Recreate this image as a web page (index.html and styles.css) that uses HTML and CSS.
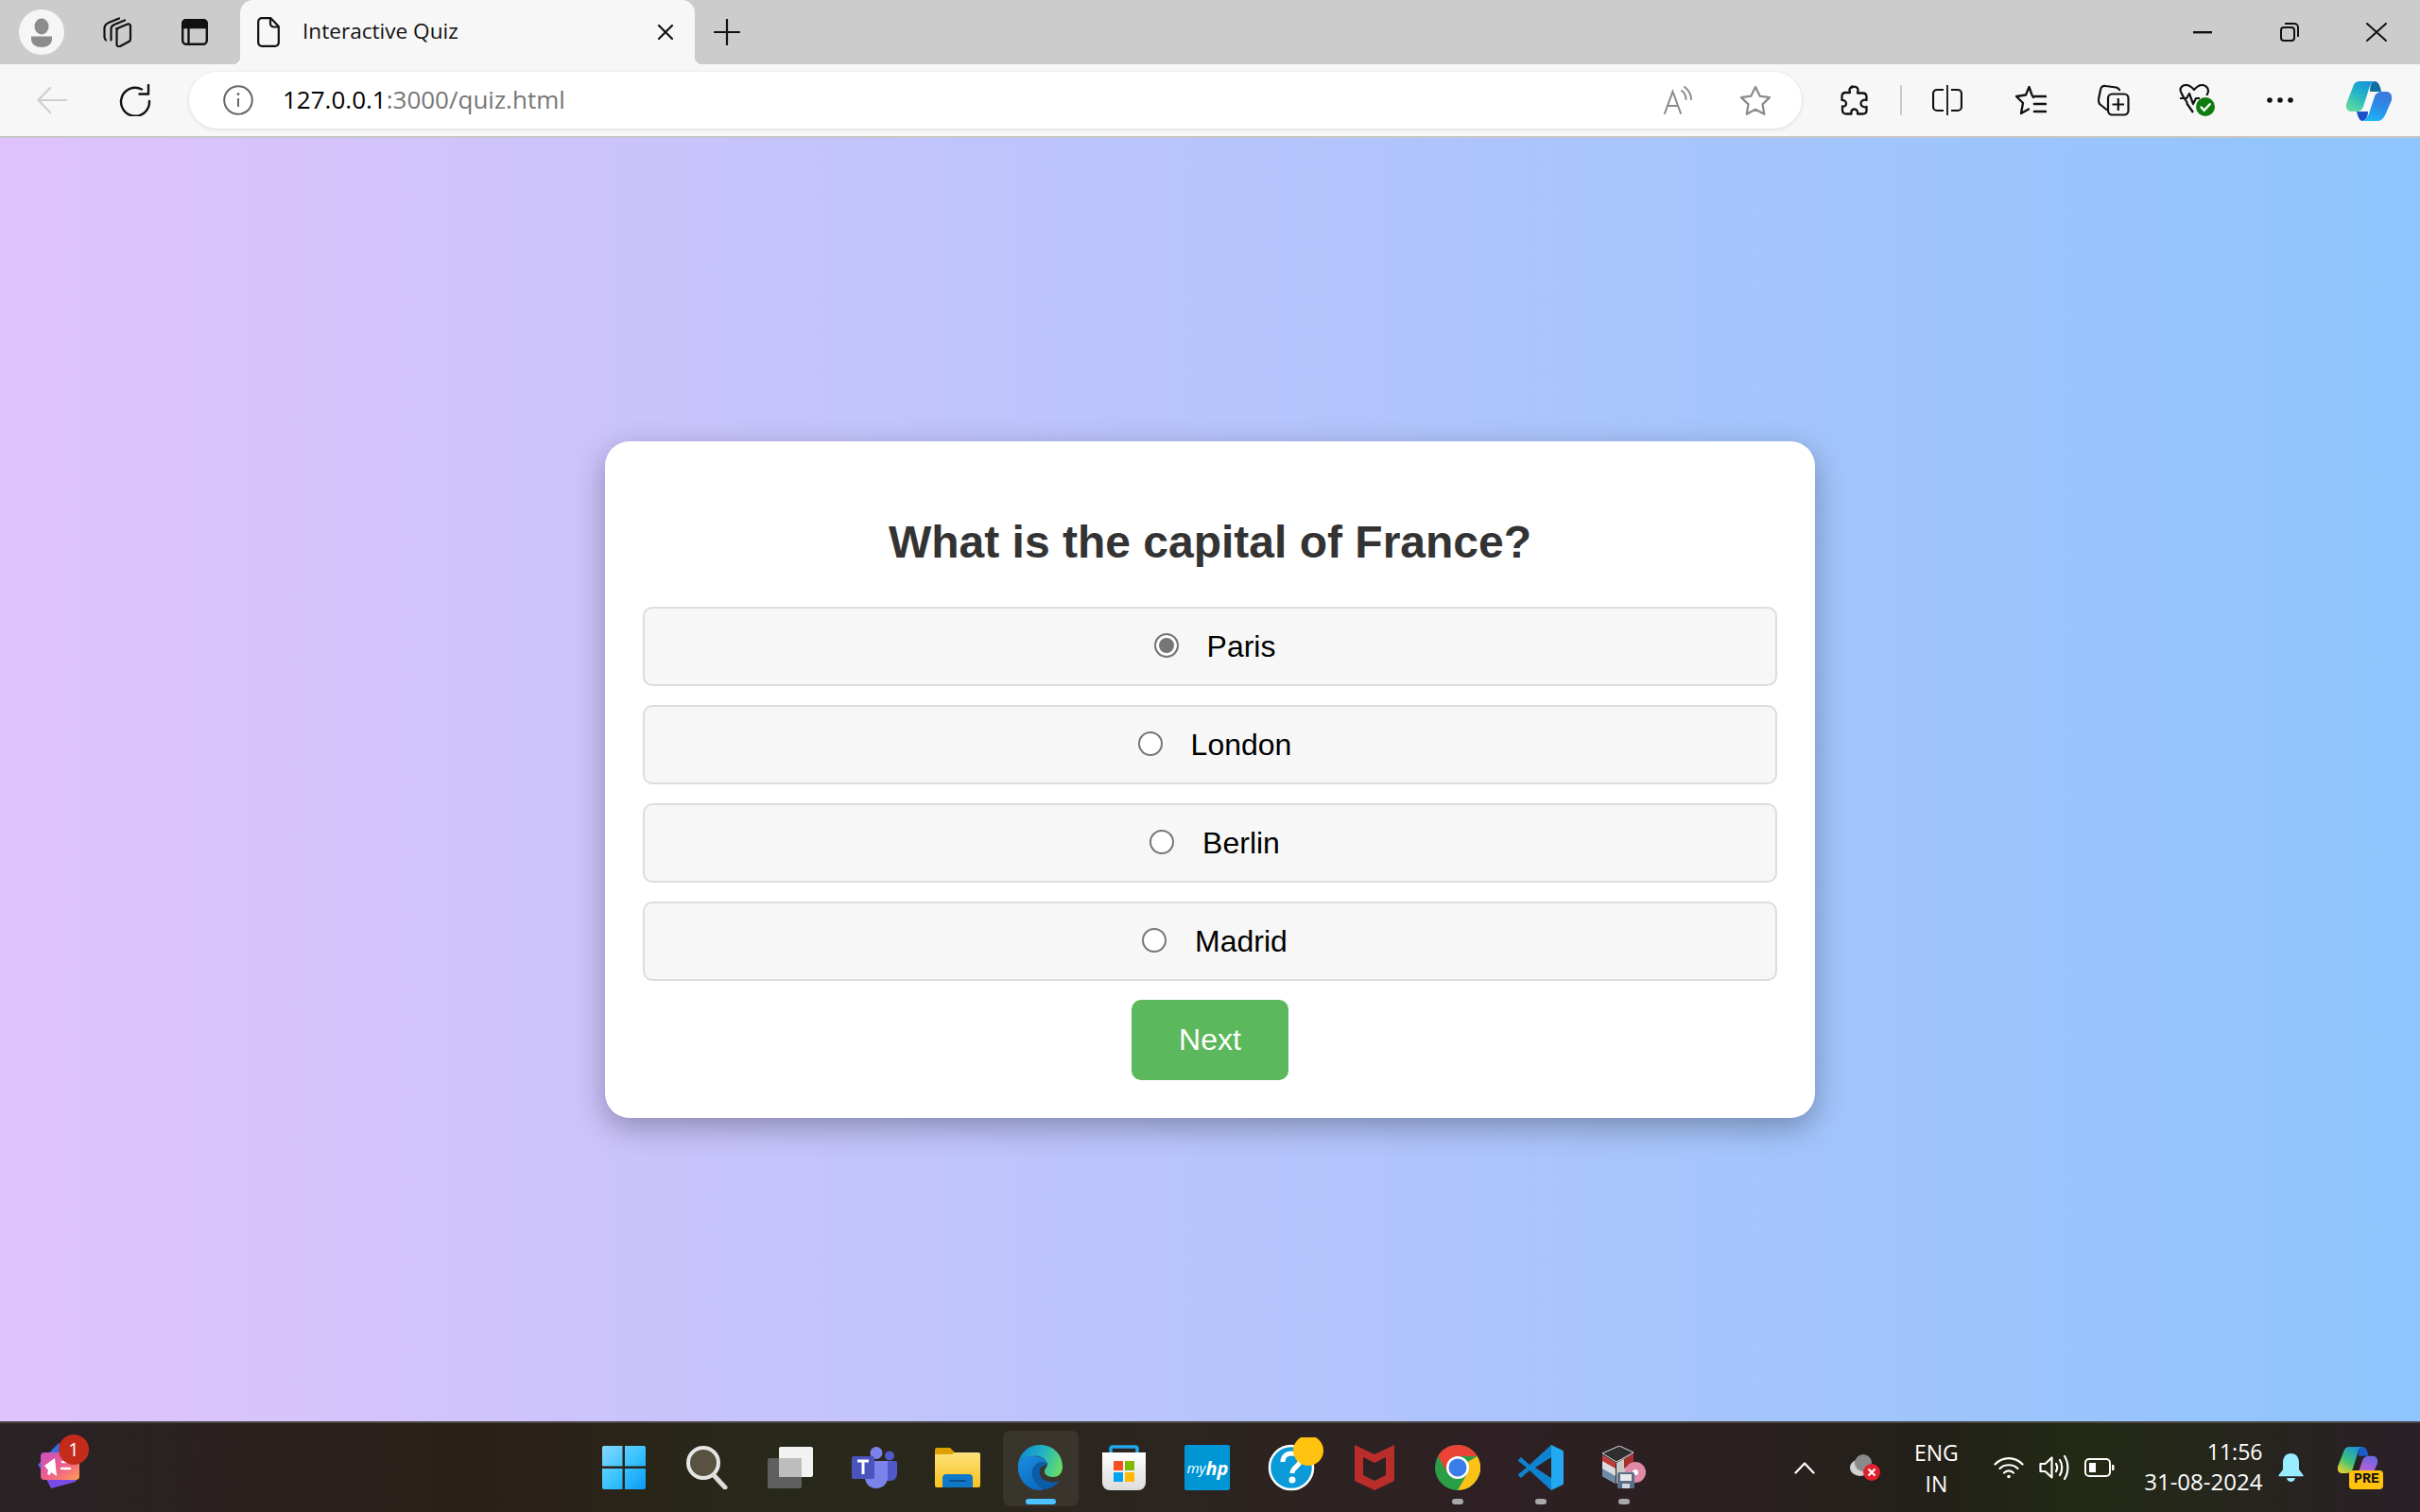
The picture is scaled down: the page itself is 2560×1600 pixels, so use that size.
FILE: index.html
```html
<!DOCTYPE html>
<html lang="en">
<head>
  <meta charset="UTF-8">
  <title>Interactive Quiz</title>
  <link rel="stylesheet" href="styles.css">
</head>
<body>
  <svg class="defs" width="0" height="0">
    <defs>
      <linearGradient id="copA" x1="0.8" y1="0" x2="0.2" y2="1"><stop offset="0" stop-color="#1592d8"/><stop offset="0.5" stop-color="#25b8c4"/><stop offset="1" stop-color="#62dc9c"/></linearGradient>
      <linearGradient id="copB" x1="0.7" y1="0" x2="0.3" y2="1"><stop offset="0" stop-color="#3a78dc"/><stop offset="0.5" stop-color="#2a8ce8"/><stop offset="1" stop-color="#1fb4f6"/></linearGradient>
      <linearGradient id="preA" x1="0.8" y1="0" x2="0.2" y2="1"><stop offset="0" stop-color="#1e8fe0"/><stop offset="0.55" stop-color="#3ac27a"/><stop offset="1" stop-color="#e6d12c"/></linearGradient>
      <linearGradient id="preB" x1="0.7" y1="0" x2="0.3" y2="1"><stop offset="0" stop-color="#6a6ae0"/><stop offset="0.5" stop-color="#b05fd8"/><stop offset="1" stop-color="#f06a7a"/></linearGradient>
      <linearGradient id="startG" x1="0" y1="0" x2="1" y2="1"><stop offset="0" stop-color="#86d8ff"/><stop offset="0.5" stop-color="#3cc4ff"/><stop offset="1" stop-color="#0a9bf5"/></linearGradient>
      <linearGradient id="edgeTop" x1="0" y1="0.3" x2="1" y2="0.6"><stop offset="0" stop-color="#0e8ad4"/><stop offset="0.5" stop-color="#22b4c4"/><stop offset="1" stop-color="#66dc66"/></linearGradient>
      <linearGradient id="edgeLow" x1="0" y1="0" x2="0.6" y2="1"><stop offset="0" stop-color="#1a8ce0"/><stop offset="1" stop-color="#0c6cc0"/></linearGradient>
      <linearGradient id="folderG" x1="0" y1="0" x2="0" y2="1"><stop offset="0" stop-color="#fde27a"/><stop offset="1" stop-color="#f9c11e"/></linearGradient>
      <linearGradient id="bagG" x1="0" y1="0" x2="0" y2="1"><stop offset="0" stop-color="#ffffff"/><stop offset="1" stop-color="#dcdcdc"/></linearGradient>
      <linearGradient id="widgetG" x1="0" y1="0" x2="1" y2="1"><stop offset="0" stop-color="#c850c0"/><stop offset="0.55" stop-color="#f0608a"/><stop offset="1" stop-color="#ffa050"/></linearGradient>
    </defs>
  </svg>

  <header class="tabstrip">
    <div class="slot-avatar">
      <svg width="48" height="48" viewBox="0 0 48 48"><circle cx="24" cy="24" r="24" fill="#f6f6f6"/><ellipse cx="24" cy="18" rx="7.5" ry="8.5" fill="#8c8c8c"/><path d="M13 28.5h22v3c0 5-5 8.5-11 8.5s-11-3.5-11-8.5z" fill="#8c8c8c"/></svg>
    </div>
    <div class="slot-strip">
      <svg width="32" height="32" viewBox="0 0 32 32" fill="none" stroke="#111" stroke-width="2.2" stroke-linejoin="round" stroke-linecap="round"><path d="M15 12.5l12-5c1.5-.5 3 .4 3 2v14c0 1.2-.7 2-1.7 2.5l-9.3 5c-1.5.8-3.5 0-3.5-2v-14c0-1.2 0-2 1-2.5z"/><path d="M24 3.5l-11 4.5c-2 .9-3.5 2-3.5 4.5v12"/><path d="M18 1.5l-10 4c-3 1.2-5.5 3-5.5 6.5v9c0 1.5.5 2.5 1.5 3.5"/></svg>
    </div>
    <div class="slot-strip">
      <svg width="28" height="28" viewBox="0 0 28 28" fill="none" stroke="#111" stroke-width="2.4"><rect x="1.2" y="1.2" width="25.6" height="25.6" rx="4"/><path d="M1.2 5a4 4 0 0 1 4-4h17.6a4 4 0 0 1 4 4v4H1.2z" fill="#111"/><path d="M7.5 9v18"/></svg>
    </div>
    <div class="tab">
      <svg width="24" height="32" viewBox="0 0 24 32" fill="none" stroke="#111" stroke-width="2.2" stroke-linejoin="round"><path d="M5 1.2h9.5l8.3 8.8v17a3.8 3.8 0 0 1-3.8 3.8H5A3.8 3.8 0 0 1 1.2 27V5A3.8 3.8 0 0 1 5 1.2z"/><path d="M14 1.5V7a3.5 3.5 0 0 0 3.5 3.5h5"/></svg>
      <span class="tab-title">Interactive Quiz</span>
      <svg class="tab-close" width="18" height="16" viewBox="0 0 18 16" stroke="#111" stroke-width="2.2" stroke-linecap="round"><path d="M2 1l14 14M16 1L2 15"/></svg>
    </div>
    <div class="slot-new">
      <svg width="28" height="28" viewBox="0 0 28 28" stroke="#111" stroke-width="2.2" stroke-linecap="round"><path d="M14 1v26M1 14h26"/></svg>
    </div>
    <div class="win-controls">
      <div class="win-btn"><svg width="20" height="4" viewBox="0 0 20 4"><rect width="20" height="2.4" y="1" fill="#111"/></svg></div>
      <div class="win-btn"><svg width="20" height="20" viewBox="0 0 20 20" fill="none" stroke="#111" stroke-width="2"><rect x="1" y="5" width="14" height="14" rx="3"/><path d="M5 1h10a4 4 0 0 1 4 4v10"/></svg></div>
      <div class="win-btn"><svg width="22" height="20" viewBox="0 0 22 20" stroke="#111" stroke-width="2" stroke-linecap="round"><path d="M1 1l20 18M21 1L1 19"/></svg></div>
    </div>
  </header>

  <nav class="toolbar">
    <div class="tool-btn">
      <svg width="32" height="28" viewBox="0 0 32 28" fill="none" stroke="#cfcfcf" stroke-width="2.2" stroke-linecap="round" stroke-linejoin="round"><path d="M14 1L1.5 14 14 27M2 14h29"/></svg>
    </div>
    <div class="tool-btn">
      <svg width="34" height="34" viewBox="0 0 34 34" fill="none" stroke="#111" stroke-width="2.4" stroke-linecap="round" stroke-linejoin="round"><path d="M24 5.5A15 15 0 1 0 32 18"/><path d="M31 1v9.5H21.5"/></svg>
    </div>
    <div class="address">
      <svg class="addr-info" width="32" height="32" viewBox="0 0 32 32" fill="none" stroke="#666" stroke-width="2"><circle cx="16" cy="16" r="14.8"/><path d="M16 14v9"/><circle cx="16" cy="9.5" r="1" fill="#666" stroke-width="1"/></svg>
      <span class="url"><span class="url-host">127.0.0.1</span>:3000/quiz.html</span>
      <svg class="addr-read" width="32" height="30" viewBox="0 0 32 30" fill="none" stroke="#8a8a8a" stroke-width="2" stroke-linecap="round"><path d="M1 29L9.5 6 18 29M4 21h11"/><path d="M19 5c3 2 4.5 5 4.5 9M22 1c4 3 7 7 7 13"/></svg>
      <svg class="addr-star" width="34" height="32" viewBox="0 0 34 32" fill="none" stroke="#8a8a8a" stroke-width="2.2" stroke-linejoin="round"><path d="M17 2l4.6 9.6 10.4 1.5-7.5 7.3 1.8 10.4-9.3-5-9.3 5 1.8-10.4L2 13.1l10.4-1.5z"/></svg>
    </div>
    <div class="tool-btn tool-first">
      <svg width="30" height="32" viewBox="0 0 30 32" fill="none" stroke="#111" stroke-width="2.3" stroke-linejoin="round"><path d="M12 2.5c3-2 6.5-.5 6.5 3 0 1-.5 2-.5 3h5.5c2.5 0 4 1.500 4 4v3.500c-3.500-1-6 .8-6 3.500s2.500 4.500 6 3.500V27c0 2-1.500 3.500-4 3.500H18c.5-3-1-5-3.500-5s-3.500 2-3 5H6c-2.500 0-4-1.500-4-4v-4c2 .5 4-.5 4-3s-3-4-4.500-3.500v-4c0-2.500 1.500-4 4-4H10c0-1-.5-2-.5-3 0-1.200 1-2.300 2.500-3.500z"/></svg>
    </div>
    <div class="tool-sep"></div>
    <div class="tool-btn">
      <svg width="32" height="32" viewBox="0 0 32 32" fill="none" stroke="#111" stroke-width="2.2"><path d="M12 5H5a4 4 0 0 0-4 4v14a4 4 0 0 0 4 4h7M20 5h7a4 4 0 0 1 4 4v14a4 4 0 0 1-4 4h-7"/><path d="M16 0v32" stroke-width="1.8"/></svg>
    </div>
    <div class="tool-btn">
      <svg width="34" height="32" viewBox="0 0 34 32" fill="none" stroke="#111" stroke-width="2.3" stroke-linejoin="round" stroke-linecap="round"><path d="M20 13l-1.5-2.5L15.5 2 12 10.5 2 12l7 7-2 11 8-4.5"/><path d="M21 12h12M21 20h12M21 28h12" stroke-width="2.6"/></svg>
    </div>
    <div class="tool-btn">
      <svg width="34" height="34" viewBox="0 0 34 34" fill="none" stroke="#111" stroke-width="2.2" stroke-linejoin="round"><path d="M10 27.5L2 21c-1-2-1.5-3-1-5l2-10c.5-3 2.5-4.5 5.5-4l11 1.5c2 .4 3.3 1.5 4 3.5"/><rect x="11" y="10.5" width="21.5" height="22" rx="4.5"/><path d="M21.8 15v13M15.5 21.5h12.5"/></svg>
    </div>
    <div class="tool-btn">
      <svg width="38" height="34" viewBox="0 0 38 34"><path d="M9 20l-4-6C3 10 1.5 8.5 1.5 6c0-3 3-5 6-5 3 0 5.5 1.5 8.5 5 3-3.5 5.5-5 8.5-5s6.5 2.5 6.5 6c0 2-1 3.5-1.5 5" fill="none" stroke="#111" stroke-width="2.2" stroke-linejoin="round"/><path d="M1 15h7l3-5 4 11 3-6h4M8 20l7 10" fill="none" stroke="#111" stroke-width="2.2" stroke-linejoin="round"/><circle cx="28" cy="24" r="10" fill="#0f7b0f"/><path d="M23.5 24.5l3.2 3.2 6-6.5" fill="none" stroke="#fff" stroke-width="2.4" stroke-linecap="round"/></svg>
    </div>
    <div class="tool-btn">
      <svg width="28" height="6" viewBox="0 0 28 6" fill="#111"><circle cx="3" cy="3" r="2.8"/><circle cx="14" cy="3" r="2.8"/><circle cx="25" cy="3" r="2.8"/></svg>
    </div>
    <div class="tool-btn tool-copilot">
      <svg width="48" height="43" viewBox="0 0 48 43">
        <path d="M30 1C34 1 36 6 37 12H25C25 6 26 2 30 1Z" fill="#0f6f9f"/>
        <path d="M14 1H30C26 2 25 6 24 9L18 28C17 31 14 33 10 33H5C1 33-1 29 0 25L7 7C8 3 11 1 14 1Z" fill="url(#copA)"/>
        <path d="M11 33H23C23 38 21 42 17 43C14 43 12 38 11 33Z" fill="#1a50c8"/>
        <path d="M38 12H42C47 12 49 16 48 21L41 37C39 41 36 43 33 43H17C21 42 23 38 24 35L30 17C31 14 34 12 38 12Z" fill="url(#copB)"/>
      </svg>
    </div>
  </nav>

  <main class="page">
    <section class="quiz-card">
      <h2 class="question">What is the capital of France?</h2>
      <label class="option"><input class="radio" type="radio" name="answer" checked><span>Paris</span></label>
      <label class="option"><input class="radio" type="radio" name="answer"><span>London</span></label>
      <label class="option"><input class="radio" type="radio" name="answer"><span>Berlin</span></label>
      <label class="option"><input class="radio" type="radio" name="answer"><span>Madrid</span></label>
      <button class="next-btn">Next</button>
    </section>
  </main>

  <footer class="taskbar">
    <div class="tb-widget">
      <svg width="64" height="56" viewBox="0 0 64 56">
        <path d="M0 31L22 8 30 20 10 45Z" fill="#2f6fe8"/><path d="M6 40L14 56 40 49 44 40Z" fill="#7b4be8"/>
        <rect x="3" y="18" width="41" height="29" rx="4" fill="url(#widgetG)"/>
        <path d="M7 32l11-8 2 19-6-4-1 3-3-1 1-4z" fill="#fff"/><path d="M26 28h10M25 35h9" stroke="#fff" stroke-width="2.5" stroke-linecap="round"/>
      </svg>
      <span class="tb-badge">1</span>
    </div>
    <div class="tb-apps">
      <div class="app">
        <svg width="46" height="46" viewBox="0 0 46 46" fill="url(#startG)"><path d="M0 2a2 2 0 0 1 2-2h19.5v21.5H0zM24 0h20a2 2 0 0 1 2 2v19.5H24zM0 24h21.5v22H2a2 2 0 0 1-2-2zM24 24h22v20a2 2 0 0 1-2 2H24z"/></svg>
      </div>
      <div class="app">
        <svg width="44" height="46" viewBox="0 0 44 46"><circle cx="18" cy="18" r="16" fill="#5a5240" stroke="#e6e6e6" stroke-width="4"/><path d="M29 31l12 13" stroke="#dcdcdc" stroke-width="5" stroke-linecap="round"/></svg>
      </div>
      <div class="app">
        <svg width="48" height="44" viewBox="0 0 48 44"><rect x="0" y="12" width="36" height="32" rx="2" fill="#5f5f5f"/><rect x="12" y="0" width="36" height="32" rx="2" fill="#f2f2f2"/><rect x="12" y="12" width="24" height="20" fill="#bdbdbd"/></svg>
      </div>
      <div class="app">
        <svg width="48" height="44" viewBox="0 0 48 44"><circle cx="26" cy="6.5" r="6.5" fill="#7b83eb"/><circle cx="40" cy="9.5" r="5" fill="#5059c9"/><path d="M34 15h12a2 2 0 0 1 2 2v11c0 5-3 8-7 8h-7z" fill="#5059c9"/><path d="M14 15h24v17c0 7-5 12-12 12s-12-5-12-12z" fill="#7b83eb"/><rect x="0" y="10" width="24" height="24" rx="2" fill="#4b53bc"/><path d="M6 15h12M12 15v14" stroke="#fff" stroke-width="3"/></svg>
      </div>
      <div class="app">
        <svg width="48" height="42" viewBox="0 0 48 42"><path d="M0 2a2 2 0 0 1 2-2h14l5 5h20v12H0z" fill="#e0a000"/><path d="M0 7h18l3-2h25a2 2 0 0 1 2 2v33a2 2 0 0 1-2 2H2a2 2 0 0 1-2-2z" fill="url(#folderG)"/><path d="M8 42V32a4 4 0 0 1 4-4h24a4 4 0 0 1 4 4v10z" fill="#0f78c8"/><path d="M15 35h18" stroke="#0a4f90" stroke-width="2"/></svg>
      </div>
      <div class="app app-active">
        <svg width="48" height="48" viewBox="0 0 48 48">
          <path d="M0 19C3 7 12 0 23 0C37 0 47 10 47 23C47 31 42 34 37 34C31 34 27 31 28 27C29 24 31 23 31 20C29 13 21 11 15 12C8 12 3 15 0 19Z" fill="url(#edgeTop)"/>
          <path d="M0 19C3 15 9 11 16 12C24 12 30 15 31 20C26 17 20 18 17 23C13 29 15 40 27 47C26 47.6 25 48 23 48C10 48 0 37 0 24Z" fill="url(#edgeLow)"/>
          <path d="M31 20C26 17 20 18 17 23C13 29 15 40 27 47C33 47 39 44 44 38C39 40 32 40 27 37C22 33 22 27 24 24C26 22 29 22 31 20Z" fill="#0d5ca8"/>
        </svg>
        <i class="app-bar active"></i>
      </div>
      <div class="app">
        <svg width="46" height="48" viewBox="0 0 46 48"><path d="M9 8V4a2 2 0 0 1 2-2h24a2 2 0 0 1 2 2v4" fill="none" stroke="#1ea7ee" stroke-width="3.5"/><path d="M0 8h46v32a8 8 0 0 1-8 8H8a8 8 0 0 1-8-8z" fill="url(#bagG)"/><rect x="12" y="17" width="10" height="10" fill="#f25022"/><rect x="24" y="17" width="10" height="10" fill="#7fba00"/><rect x="12" y="29" width="10" height="10" fill="#00a4ef"/><rect x="24" y="29" width="10" height="10" fill="#ffb900"/></svg>
      </div>
      <div class="app">
        <div class="myhp"><span>my</span><b>hp</b></div>
      </div>
      <div class="app">
        <svg class="help-icon" width="72" height="64" viewBox="0 0 72 64"><circle cx="36" cy="32" r="23" fill="#0a9bd8" stroke="#fff" stroke-width="2.5"/><path d="M27 26c0-6 4-9 9-9s9 3 9 8c0 6-8 6-8 13" fill="none" stroke="#fff" stroke-width="5"/><circle cx="37" cy="45" r="3.5" fill="#fff"/><circle cx="54" cy="14" r="16" fill="#ffc20e"/></svg>
      </div>
      <div class="app">
        <svg width="42" height="48" viewBox="0 0 42 48"><path fill-rule="evenodd" d="M0 0L21 10 42 0V38L21 48 0 38ZM9 13V32L21 38 33 32V13L21 19Z" fill="#b92d2a"/></svg>
      </div>
      <div class="app">
        <svg width="48" height="48" viewBox="0 0 48 48"><circle cx="24" cy="24" r="24" fill="#2b9f48"/><path d="M24 24L44.8 12A24 24 0 0 1 24 48L34.4 30z" fill="#fbc116"/><path d="M24 24L13.6 30 3.2 12A24 24 0 0 1 44.8 12H24z" fill="#ea4335"/><circle cx="24" cy="24" r="12" fill="#fff"/><circle cx="24" cy="24" r="9.5" fill="#3a7de8"/></svg>
        <i class="app-bar"></i>
      </div>
      <div class="app">
        <svg width="48" height="48" viewBox="0 0 48 48"><path d="M3 13L0 16V17L9 24 0 31V32L3 35 12 27 35 48V35L18 24 35 13V0L12 21Z" fill="#0e83d0"/><path d="M35 0L46.5 5.5Q48 6.2 48 8V40Q48 41.8 46.5 42.5L35 48Z" fill="#23a9f2"/></svg>
        <i class="app-bar"></i>
      </div>
      <div class="app">
        <svg width="48" height="46" viewBox="0 0 48 46">
          <path d="M1 8L19 0 34 7 16 17Z" fill="#2e2e2e" stroke="#ddd"/>
          <path d="M1 10L15 18V40L1 32Z" fill="#d8dde2"/><path d="M1 10L15 18V24L1 16Z" fill="#c33a34"/><path d="M1 24L15 32V40L1 32Z" fill="#6d8aa6"/>
          <path d="M16 18L34 8V32L16 40Z" fill="#c8c8c8"/><path d="M24 14L34 8V18L24 24Z" fill="#a52f2b"/>
          <circle cx="36" cy="28" r="11" fill="#e08aa8"/><circle cx="36" cy="28" r="3" fill="#fff"/>
          <rect x="17" y="28" width="18" height="17" rx="1.5" fill="#5a7088"/><rect x="20" y="30" width="12" height="7" fill="#e8e8e8"/><rect x="22" y="40" width="8" height="5" fill="#cfd6de"/>
        </svg>
        <i class="app-bar"></i>
      </div>
    </div>
    <div class="tray">
      <svg class="tray-chevron" width="22" height="13" viewBox="0 0 22 13" fill="none" stroke="#fff" stroke-width="2.2" stroke-linecap="round" stroke-linejoin="round"><path d="M1.5 11.5L11 1.5l9.5 10"/></svg>
      <svg class="tray-cloud" width="32" height="28" viewBox="0 0 32 28"><ellipse cx="11" cy="14" rx="11" ry="9" fill="#d0d0d0"/><ellipse cx="14" cy="9" rx="9" ry="9" fill="#8a8a8a"/><circle cx="23" cy="19" r="9" fill="#e0202c"/><path d="M19.5 15.5l7 7M26.5 15.5l-7 7" stroke="#fff" stroke-width="2.2"/></svg>
      <div class="tray-lang"><span>ENG</span><span>IN</span></div>
      <svg class="tray-wifi" width="32" height="24" viewBox="0 0 32 24" fill="none" stroke="#fff" stroke-width="2.2" stroke-linecap="round"><path d="M1.5 8.5c8-8.5 21-8.5 29 0M6.5 13c5-5 14-5 19 0M11 17.5c3-2.5 7-2.5 10 0"/><circle cx="16" cy="21.5" r="1.8" fill="#fff" stroke="none"/></svg>
      <svg class="tray-vol" width="32" height="28" viewBox="0 0 32 28" fill="none" stroke="#fff" stroke-width="2.2" stroke-linejoin="round" stroke-linecap="round"><path d="M1.5 10h5l7-6.5v21l-7-6.5h-5z"/><path d="M18 10c1.5 2.5 1.5 5.5 0 8M22 6c3 4.5 3 11.5 0 16M27 2c4.5 7 4.5 17 0 24"/></svg>
      <svg class="tray-batt" width="32" height="20" viewBox="0 0 32 20" fill="none" stroke="#fff" stroke-width="2"><rect x="1" y="1" width="26" height="18" rx="4"/><rect x="5" y="5" width="7" height="10" fill="#fff" stroke="none"/><path d="M29 7h1.5a1 1 0 0 1 1 1v4a1 1 0 0 1-1 1H29" fill="#fff" stroke="none"/></svg>
      <div class="tray-clock"><span class="clock-time">11:56</span><span>31-08-2024</span></div>
      <svg class="tray-bell" width="27" height="30" viewBox="0 0 27 30" fill="#99ebff"><path d="M13.5 0c5.5 0 8.5 4 8.5 10v7l4.500 6a.8.8 0 0 1-.6 1.200H1.100A.8.8 0 0 1 .5 23L5 17v-7C5 4 8 0 13.500 0z"/><path d="M9 26h9c-.5 2.500-2.300 4-4.500 4S9.500 28.500 9 26z"/></svg>
      <div class="tray-pre">
        <svg width="42" height="38" viewBox="0 0 48 43">
          <path d="M30 1C34 1 36 6 37 12H25C25 6 26 2 30 1Z" fill="#1a5cc8"/>
          <path d="M14 1H30C26 2 25 6 24 9L18 28C17 31 14 33 10 33H5C1 33-1 29 0 25L7 7C8 3 11 1 14 1Z" fill="url(#preA)"/>
          <path d="M38 12H42C47 12 49 16 48 21L41 37C39 41 36 43 33 43H17C21 42 23 38 24 35L30 17C31 14 34 12 38 12Z" fill="url(#preB)"/>
        </svg>
        <span class="pre-tag">PRE</span>
      </div>
    </div>
  </footer>
</body>
</html>
```

FILE: styles.css
```css
* {
  box-sizing: border-box;
}
html, body {
  margin: 0;
  padding: 0;
  height: 100%;
}
body {
  width: 2560px;
  height: 1600px;
  display: flex;
  flex-direction: column;
  overflow: hidden;
  font-family: "Liberation Sans", Arial, sans-serif;
}
svg {
  display: block;
  flex: none;
}
.defs {
  position: absolute;
}

/* tab strip */
.tabstrip {
  height: 68px;
  flex: none;
  display: flex;
  align-items: center;
  background-color: #cccccc;
}
.slot-avatar {
  width: 84px;
  display: flex;
  justify-content: center;
  padding-left: 4px;
}
.slot-strip {
  width: 84px;
  display: flex;
  justify-content: center;
  margin-left: -2px;
}
.tab {
  width: 481px;
  height: 68px;
  margin-left: 6px;
  padding: 0 22px 0 18px;
  position: relative;
  display: flex;
  align-items: center;
  background-color: #f7f7f7;
  border-radius: 14px 14px 0 0;
}
.tab::before, .tab::after {
  content: "";
  position: absolute;
  bottom: 0;
  width: 8px;
  height: 8px;
}
.tab::before {
  left: -8px;
  background: radial-gradient(circle at 0 0, transparent 8px, #f7f7f7 8.5px);
}
.tab::after {
  right: -8px;
  background: radial-gradient(circle at 100% 0, transparent 8px, #f7f7f7 8.5px);
}
.tab-title {
  margin-left: 24px;
  padding-bottom: 3px;
  flex: 1;
  font-family: "Open Sans", sans-serif;
  font-size: 22.6px;
  color: #111;
}
.slot-new {
  width: 68px;
  display: flex;
  justify-content: center;
}
.win-controls {
  margin-left: auto;
  display: flex;
}
.win-btn {
  width: 92px;
  height: 68px;
  display: flex;
  align-items: center;
  justify-content: center;
}

/* toolbar */
.toolbar {
  height: 78px;
  flex: none;
  display: flex;
  align-items: center;
  padding-left: 11px;
  background-color: #f7f7f7;
  border-bottom: 2px solid #c6c6c6;
}
.tool-btn {
  width: 88px;
  height: 60px;
  display: flex;
  align-items: center;
  justify-content: center;
}
.tool-first {
  margin-left: 12px;
}
.tool-copilot {
  margin-left: 6px;
}
.tool-sep {
  width: 2px;
  height: 32px;
  margin: 0 4px;
  background-color: #cccccc;
}
.address {
  width: 1706px;
  height: 60px;
  margin-left: 13px;
  display: flex;
  align-items: center;
  padding: 0 32px 0 36px;
  background-color: #ffffff;
  border-radius: 30px;
  box-shadow: 0 1px 4px rgba(0, 0, 0, 0.12);
}
.url {
  margin-left: 31px;
  padding-bottom: 2px;
  flex: 1;
  font-family: "Open Sans", sans-serif;
  font-size: 26px;
  color: #767676;
}
.url-host {
  color: #000;
}
.addr-star {
  margin-left: 48px;
}

/* page */
.page {
  flex: 1;
  display: flex;
  align-items: center;
  justify-content: center;
  background: linear-gradient(to right, #e0c3fc, #8ec5fc);
}
.quiz-card {
  width: 1280px;
  padding: 40px;
  display: flex;
  flex-direction: column;
  align-items: center;
  background-color: #ffffff;
  border-radius: 26px;
  box-shadow: 0 10px 32px rgba(0, 0, 0, 0.3);
}
.question {
  margin: 38px 0 39px;
  font-size: 48px;
  line-height: 58px;
  font-weight: bold;
  color: #333333;
  text-align: center;
}
.option {
  width: 100%;
  height: 84px;
  margin-bottom: 20px;
  display: flex;
  align-items: center;
  justify-content: center;
  background-color: #f7f7f7;
  border: 2px solid #dddddd;
  border-radius: 10px;
  font-size: 32px;
  color: #000;
}
.radio {
  appearance: none;
  width: 26px;
  height: 26px;
  margin: 0 30px 2px 10px;
  background-color: #fff;
  border: 2px solid #767676;
  border-radius: 50%;
}
.radio:checked {
  background-color: #767676;
  box-shadow: inset 0 0 0 3px #fff;
}
.next-btn {
  width: 166px;
  height: 85px;
  border: none;
  border-radius: 10px;
  background-color: #5cb85c;
  color: #ffffff;
  font-family: inherit;
  font-size: 32px;
}

/* taskbar */
.taskbar {
  height: 96px;
  flex: none;
  display: flex;
  align-items: center;
  border-top: 2px solid #4a4642;
  background: linear-gradient(to right, #2a2226 0%, #2b2018 20%, #28291a 32%, #2c2420 50%, #2e2024 62%, #2a2020 72%, #222018 80%, #232a14 86%, #2a2028 100%);
}
.tb-widget {
  width: 616px;
  flex: none;
  padding: 0 0 12px 40px;
  position: relative;
}
.tb-badge {
  position: absolute;
  left: 62px;
  top: -1px;
  width: 32px;
  height: 32px;
  border-radius: 50%;
  background-color: #c42b1c;
  color: #fff;
  font-family: "Open Sans", sans-serif;
  font-size: 20px;
  line-height: 32px;
  text-align: center;
}
.tb-apps {
  display: flex;
  flex: none;
}
.app {
  width: 88.2px;
  height: 94px;
  position: relative;
  display: flex;
  align-items: center;
  justify-content: center;
}
.app-active::before {
  content: "";
  position: absolute;
  left: 4px;
  top: 8px;
  width: 80px;
  height: 80px;
  border-radius: 8px;
  background-color: rgba(255, 255, 255, 0.07);
}
.app svg {
  position: relative;
}
.app .help-icon {
  margin: 0 -10px;
}
.app-bar {
  position: absolute;
  left: 38px;
  bottom: 8px;
  width: 12px;
  height: 6px;
  border-radius: 3px;
  background-color: #a8a8a8;
}
.app-bar.active {
  left: 28px;
  width: 32px;
  background-color: #4cc2ff;
}
.myhp {
  width: 48px;
  height: 48px;
  display: flex;
  align-items: center;
  justify-content: center;
  background-color: #0096d6;
  border-radius: 2px;
  color: #fff;
  font-family: "Open Sans", sans-serif;
  font-size: 15px;
  font-style: italic;
}
.myhp b {
  font-size: 20px;
}
.tray {
  flex: 1;
  height: 94px;
  display: flex;
  align-items: center;
  color: #fff;
  font-family: "Open Sans", sans-serif;
}
.tray-chevron {
  margin-left: 136px;
}
.tray-cloud {
  margin-left: 37px;
}
.tray-lang {
  width: 60px;
  margin-left: 29px;
  display: flex;
  flex-direction: column;
  align-items: center;
  gap: 3px;
  font-size: 23px;
  line-height: 30px;
}
.tray-wifi {
  margin-left: 31px;
}
.tray-vol {
  margin-left: 16px;
}
.tray-batt {
  margin-left: 16px;
}
.tray-clock {
  width: 156px;
  padding-bottom: 3px;
  display: flex;
  flex-direction: column;
  align-items: flex-end;
  gap: 2px;
  font-size: 24px;
  line-height: 30px;
}
.clock-time {
  font-size: 23px;
}
.tray-bell {
  margin-left: 17px;
}
.tray-pre {
  position: relative;
  width: 48px;
  height: 46px;
  margin-left: 36px;
}
.pre-tag {
  position: absolute;
  right: 0;
  bottom: 0;
  width: 36px;
  height: 20px;
  background-color: #ffc20e;
  border-radius: 4px;
  color: #111;
  font-family: "Liberation Mono", monospace;
  font-size: 15px;
  font-weight: bold;
  line-height: 20px;
  text-align: center;
}
```
